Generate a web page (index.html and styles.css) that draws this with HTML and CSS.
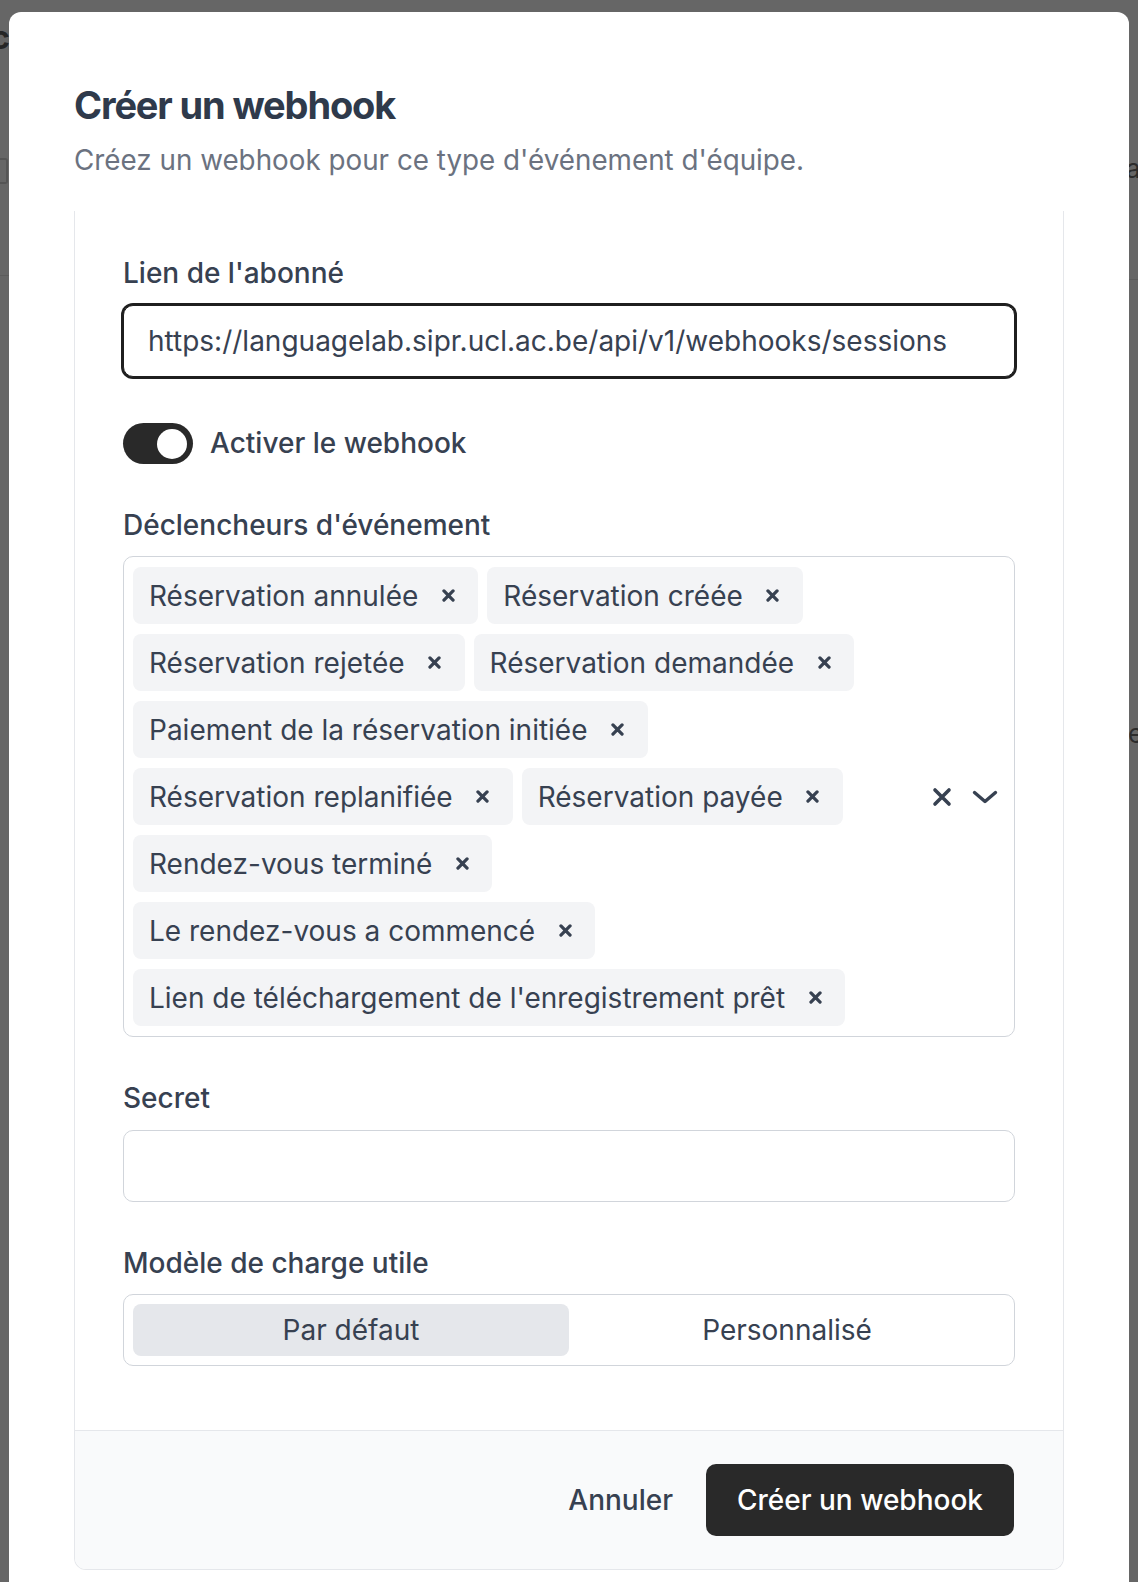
FILE: index.html
```html
<!DOCTYPE html>
<html lang="fr">
<head>
<meta charset="utf-8">
<title>Créer un webhook</title>
<link rel="stylesheet" href="styles.css">
</head>
<body>
<div class="page-behind">
  <span class="behind-glyph behind-c">c</span>
  <span class="behind-icon"></span>
  <span class="behind-line behind-line-left"></span>
  <span class="behind-glyph behind-a">a</span>
  <span class="behind-line behind-line-right"></span>
  <span class="behind-glyph behind-e">e</span>
</div>

<div class="dialog">
  <header class="dialog-header">
    <h1 class="dialog-title">Créer un webhook</h1>
    <p class="dialog-desc">Créez un webhook pour ce type d'événement d'équipe.</p>
  </header>

  <form class="card">
    <div class="card-body">
      <div class="field">
        <label class="label">Lien de l'abonné</label>
        <input class="input input-focus" type="text" value="https://languagelab.sipr.ucl.ac.be/api/v1/webhooks/sessions">
      </div>

      <div class="toggle-row">
        <span class="switch"><span class="knob"></span></span>
        <span class="toggle-label">Activer le webhook</span>
      </div>

      <div class="field">
        <label class="label">Déclencheurs d'événement</label>
        <div class="multiselect">
          <div class="values">
            <span class="chip"><span class="chip-text">Réservation annulée</span><span class="chip-remove"><svg viewBox="0 0 12 12"><path d="M1.8 1.8L10.2 10.2M10.2 1.8L1.8 10.2"/></svg></span></span>
            <span class="chip"><span class="chip-text">Réservation créée</span><span class="chip-remove"><svg viewBox="0 0 12 12"><path d="M1.8 1.8L10.2 10.2M10.2 1.8L1.8 10.2"/></svg></span></span>
            <span class="chip"><span class="chip-text">Réservation rejetée</span><span class="chip-remove"><svg viewBox="0 0 12 12"><path d="M1.8 1.8L10.2 10.2M10.2 1.8L1.8 10.2"/></svg></span></span>
            <span class="chip"><span class="chip-text">Réservation demandée</span><span class="chip-remove"><svg viewBox="0 0 12 12"><path d="M1.8 1.8L10.2 10.2M10.2 1.8L1.8 10.2"/></svg></span></span>
            <span class="chip"><span class="chip-text">Paiement de la réservation initiée</span><span class="chip-remove"><svg viewBox="0 0 12 12"><path d="M1.8 1.8L10.2 10.2M10.2 1.8L1.8 10.2"/></svg></span></span>
            <span class="chip"><span class="chip-text">Réservation replanifiée</span><span class="chip-remove"><svg viewBox="0 0 12 12"><path d="M1.8 1.8L10.2 10.2M10.2 1.8L1.8 10.2"/></svg></span></span>
            <span class="chip"><span class="chip-text">Réservation payée</span><span class="chip-remove"><svg viewBox="0 0 12 12"><path d="M1.8 1.8L10.2 10.2M10.2 1.8L1.8 10.2"/></svg></span></span>
            <span class="chip"><span class="chip-text">Rendez-vous terminé</span><span class="chip-remove"><svg viewBox="0 0 12 12"><path d="M1.8 1.8L10.2 10.2M10.2 1.8L1.8 10.2"/></svg></span></span>
            <span class="chip"><span class="chip-text">Le rendez-vous a commencé</span><span class="chip-remove"><svg viewBox="0 0 12 12"><path d="M1.8 1.8L10.2 10.2M10.2 1.8L1.8 10.2"/></svg></span></span>
            <span class="chip"><span class="chip-text">Lien de téléchargement de l'enregistrement prêt</span><span class="chip-remove"><svg viewBox="0 0 12 12"><path d="M1.8 1.8L10.2 10.2M10.2 1.8L1.8 10.2"/></svg></span></span>
          </div>
          <div class="indicators">
            <span class="indicator"><svg class="icon-clear" viewBox="0 0 20 20"><path d="M3 3L17 17M17 3L3 17"/></svg></span>
            <span class="indicator"><svg class="icon-chevron" viewBox="0 0 26 14"><path d="M2.5 2.5L13 11.5L23.5 2.5"/></svg></span>
          </div>
        </div>
      </div>

      <div class="field">
        <label class="label">Secret</label>
        <input class="input" type="text" value="">
      </div>

      <div class="field">
        <label class="label">Modèle de charge utile</label>
        <div class="segmented">
          <span class="segment segment-active">Par défaut</span>
          <span class="segment">Personnalisé</span>
        </div>
      </div>
    </div>

    <div class="card-footer">
      <button type="button" class="btn-ghost">Annuler</button>
      <button type="button" class="btn-primary">Créer un webhook</button>
    </div>
  </form>
</div>
</body>
</html>
```

FILE: styles.css
```css
* {
  box-sizing: border-box;
}

html,
body {
  margin: 0;
  padding: 0;
}

body {
  position: relative;
  height: 1582px;
  overflow: hidden;
  background: #666666;
  font-family: Inter, "Noto Sans", sans-serif;
  color: #374151;
}

/* faint remains of the page behind the overlay */
.page-behind {
  position: absolute;
  inset: 0;
}

.behind-glyph {
  position: absolute;
  font-family: Inter, sans-serif;
  color: #262626;
  line-height: 1;
}

.behind-c {
  left: -9px;
  top: 22px;
  font-size: 32px;
  font-weight: 700;
}

.behind-a {
  left: 1126px;
  top: 156px;
  font-size: 26px;
  color: #2c2c2c;
}

.behind-e {
  left: 1128px;
  top: 721px;
  font-size: 26px;
  color: #2c2c2c;
}

.behind-icon {
  position: absolute;
  left: 0;
  top: 158px;
  width: 8px;
  height: 26px;
  border: 2px solid #555;
  border-left: none;
  border-radius: 0 3px 3px 0;
}

.behind-line {
  position: absolute;
  height: 1px;
  background: #5c5c5c;
}

.behind-line-left {
  left: 0;
  top: 275px;
  width: 9px;
}

.behind-line-right {
  left: 1129px;
  top: 279px;
  width: 9px;
}

/* dialog */
.dialog {
  position: relative;
  margin: 12px 9px 0;
  min-height: 1570px;
  padding: 0 65px;
  background: #ffffff;
  border-radius: 12px 12px 0 0;
}

.dialog-header {
  padding-top: 71px;
}

.dialog-title {
  margin: 0;
  font-size: 38px;
  line-height: 44px;
  font-weight: 700;
  letter-spacing: -0.03em;
  color: #2f3a4b;
}

.dialog-desc {
  margin: 16px 0 0;
  font-size: 27.8px;
  line-height: 35px;
  color: #6b7280;
}

.card {
  margin: 33px 0 0;
  border: 1px solid #e5e7eb;
  border-top: none;
  border-radius: 0 0 12px 12px;
  overflow: hidden;
}

.card-body {
  padding: 45px 48px 64px;
}

.field + .field,
.toggle-row + .field {
  margin-top: 44px;
}

.label {
  display: block;
  font-size: 28px;
  line-height: 35px;
  font-weight: 500;
  color: #374151;
}

.input {
  display: block;
  width: 100%;
  height: 72px;
  margin-top: 14px;
  padding: 0 24px;
  border: 1px solid #d1d5db;
  border-radius: 10px;
  background: #ffffff;
  font-family: inherit;
  font-size: 28px;
  color: #374151;
  outline: none;
}

.input-focus {
  border-color: #1f1f1f;
  box-shadow: 0 0 0 2px #1f1f1f;
}

.toggle-row {
  display: flex;
  align-items: center;
  gap: 17px;
  margin-top: 46px;
}

.switch {
  position: relative;
  display: inline-block;
  width: 70px;
  height: 41px;
  border-radius: 21px;
  background: #292929;
}

.knob {
  position: absolute;
  right: 6px;
  top: 5.5px;
  width: 30px;
  height: 30px;
  border-radius: 50%;
  background: #ffffff;
}

.toggle-label {
  font-size: 28px;
  line-height: 35px;
  font-weight: 500;
  color: #374151;
}

/* multi select */
.multiselect {
  display: flex;
  align-items: center;
  margin-top: 13px;
  border: 1px solid #d1d5db;
  border-radius: 10px;
  background: #ffffff;
}

.values {
  flex: 1;
  display: flex;
  flex-wrap: wrap;
  gap: 10px 9px;
  padding: 10px 0 10px 9px;
}

.chip {
  display: inline-flex;
  align-items: center;
  height: 57px;
  padding-left: 16px;
  border-radius: 8px;
  background: #f3f4f6;
  font-size: 28px;
  color: #374151;
  white-space: nowrap;
}

.chip-remove {
  display: inline-flex;
  align-items: center;
  justify-content: center;
  width: 60px;
  height: 100%;
}

.chip-remove svg {
  width: 13px;
  height: 13px;
  fill: none;
  stroke: #374151;
  stroke-width: 3;
  stroke-linecap: round;
}

.indicators {
  display: flex;
  align-items: center;
  padding-right: 8px;
}

.indicator {
  display: inline-flex;
  align-items: center;
  justify-content: center;
  width: 43px;
  height: 40px;
}

.icon-clear {
  width: 20px;
  height: 20px;
  fill: none;
  stroke: #374151;
  stroke-width: 3.6;
  stroke-linecap: round;
}

.icon-chevron {
  width: 26px;
  height: 14px;
  fill: none;
  stroke: #374151;
  stroke-width: 3.4;
  stroke-linecap: round;
  stroke-linejoin: round;
}

/* segmented control */
.segmented {
  display: grid;
  grid-template-columns: 1fr 1fr;
  height: 72px;
  margin-top: 13px;
  padding: 9px;
  border: 1px solid #d1d5db;
  border-radius: 10px;
}

.segment {
  display: flex;
  align-items: center;
  justify-content: center;
  border-radius: 8px;
  font-size: 28px;
  color: #374151;
}

.segment-active {
  background: #e5e7eb;
}

/* footer */
.card-footer {
  display: flex;
  justify-content: flex-end;
  align-items: center;
  gap: 17px;
  padding: 33px 49px;
  border-top: 1px solid #e5e7eb;
  background: #f9fafb;
}

.btn-ghost {
  padding: 0 16px;
  height: 72px;
  border: none;
  background: transparent;
  font-family: inherit;
  font-size: 28px;
  font-weight: 500;
  color: #374151;
}

.btn-primary {
  height: 72px;
  padding: 0 31px;
  border: none;
  border-radius: 10px;
  background: #292929;
  font-family: inherit;
  font-size: 28px;
  font-weight: 500;
  color: #ffffff;
}
```
